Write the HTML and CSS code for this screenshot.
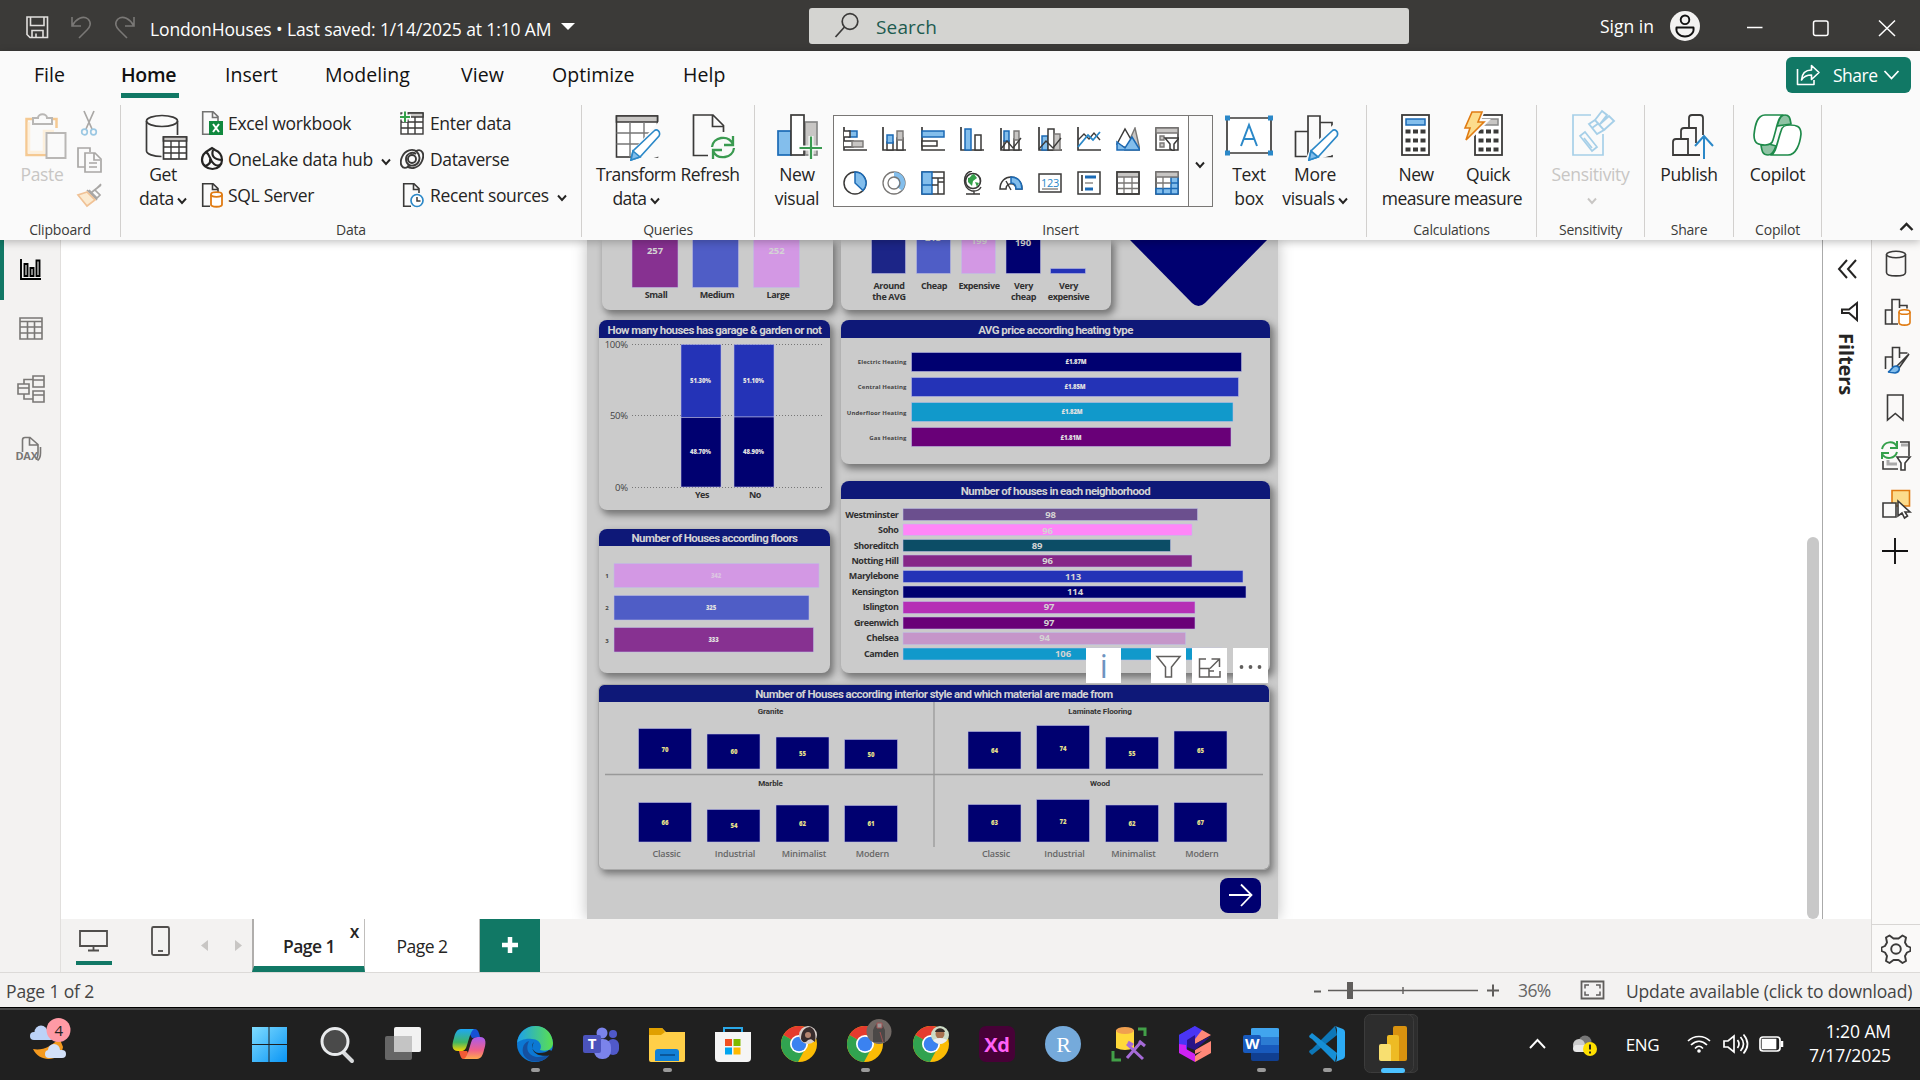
FILE: index.html
```html
<!DOCTYPE html>
<html lang="en">
<head>
<meta charset="utf-8">
<title>LondonHouses</title>
<link rel="stylesheet" href="styles.css">
</head>
<body>
<svg class="defs" width="0" height="0">
  <symbol id="chev" viewBox="0 0 10 8"><path d="M1 1.500 5 6 9 1.500" fill="none" stroke="currentColor" stroke-width="1.900"/></symbol>
  <symbol id="page" viewBox="0 0 24 26"><path d="M10 24.300H2.700V1.700H13l5 5V11M12.500 2v5.500H18" fill="none" stroke="#3b3a39" stroke-width="1.600"/></symbol>
  <symbol id="chrome" viewBox="0 0 36 36"><circle cx="18" cy="18" r="18" fill="#fbbc05"/><path d="M18 18 2.400 9A18 18 0 0 1 33.600 9H18z" fill="#e53b2e"/><path d="M2.400 9A18 18 0 0 0 17 36l7-13-6-5z" fill="#31a350"/><circle cx="18" cy="18" r="9" fill="#fff"/><circle cx="18" cy="18" r="7.300" fill="#3b82f0"/></symbol>
</svg>

<header class="titlebar">
  <svg class="quick" width="150" height="51" fill="none" stroke="#e1dfdd" stroke-width="1.6">
    <path d="M27 17h20.500v20.500H30L27 34.500zM30.500 17v8.500h13.500V17M32 37.500v-7h11v7M36 37v-3.500"/>
    <g stroke="#7a7876"><path d="M72 17v9h9M72.500 25.500C76 19 83 15 88 19c4 4 2 8-1 11l-8 8"/><path d="M134 17v9h-9M133.500 25.500C130 19 123 15 118 19c-4 4-2 8 1 11l8 8"/></g>
  </svg>
  <span class="doc">LondonHouses • Last saved: 1/14/2025 at 1:10 AM</span>
  <i class="tri"></i>
  <div class="search">
    <svg width="26" height="28" fill="none" stroke="#3b3a39" stroke-width="1.700"><circle cx="16" cy="9.500" r="7.800"/><path d="M10.500 15 1.500 25"/></svg>
    <span>Search</span>
  </div>
  <span class="signin">Sign in</span>
  <svg class="avatar" width="30" height="30"><circle cx="15" cy="15" r="15" fill="#f3f2f1"/><circle cx="15" cy="8.800" r="4.300" fill="none" stroke="#111" stroke-width="1.900"/><path d="M6.500 16.500h17c1 5-3 9-8.500 9s-9.500-4-8.500-9z" fill="none" stroke="#111" stroke-width="1.900" stroke-linejoin="round"/></svg>
  <svg class="winbtns" width="160" height="51" fill="none" stroke="#fff" stroke-width="1.500"><path d="M7 27.500h15.500"/><rect x="73.500" y="21" width="14.500" height="14.500" rx="2"/><path d="M139 20.500 155 36M155 20.500 139 36"/></svg>
</header>

<div class="ribbon">
  <nav class="menu">
    <a class="m-file">File</a><a class="m-home on">Home</a><a class="m-insert">Insert</a><a class="m-modeling">Modeling</a><a class="m-view">View</a><a class="m-optimize">Optimize</a><a class="m-help">Help</a>
    <button class="share"><svg width="26" height="24" fill="none" stroke="#fff" stroke-width="1.600"><path d="M1.500 6v15.500H18V17M5.500 17C6 10 10 7 15.500 7V2.500L23 9.500 15.500 16.500V12C11 12 8 13 5.500 17z" stroke-linejoin="round"/></svg><span>Share</span><svg width="17" height="12" fill="none" stroke="#fff" stroke-width="1.800"><path d="M1.500 2 8.500 9.500 15.500 2"/></svg></button>
  </nav>
  <div class="groups">
    <section class="group g-clip">
      <div class="body">
        <div class="big off"><svg width="52" height="56" fill="none" stroke-width="2"><path d="M18 14H10.500v36H30M36 14h4.500v9" stroke="#f5c992" stroke-width="2.500"/><path d="M13 17v30h15V26h10" stroke="#fdf0dc" stroke-width="2.500"/><path d="M17 19v-6h5c0-5 9-5 9 0h5v6z" stroke="#b9b7b5" fill="#fafafa"/><path d="M30.500 28H49.500v25H30.500z" stroke="#b9b7b5" fill="#fafafa"/></svg>Paste</div>
        <svg class="clipcol" width="26" height="115" fill="none" stroke-width="1.700"><g stroke="#a9a7a5"><path d="M8 6 16 24M18 6 10 24"/><path d="M9 62H2V43h12v4M9 48h10l6 6v13H9zM18 48v7h6M13 58h8M13 62h8"/><path d="m25 80-9 7m-3-2 8 8 3-3-5-5 6-6M11 85l10 10"/></g><g stroke="#9cc8e3"><circle cx="8.500" cy="27" r="2.800"/><circle cx="17.500" cy="27" r="2.800"/></g><path d="M11 87 2 90l9 11 8-6z" stroke="#f0c296" fill="#fbead0"/></svg>
      </div>
      <h4>Clipboard</h4>
    </section>
    <section class="group g-data">
      <div class="body">
        <div class="big getdata"><svg width="52" height="56" fill="none" stroke="#3b3a39" stroke-width="1.700"><ellipse cx="25" cy="16" rx="15.500" ry="5.500"/><path d="M9.500 16v30c0 3 7 5.500 15 5.500M40.500 16v14"/><rect x="26.500" y="32" width="23" height="22" fill="#fff"/><path d="M26.500 32h23v4h-23z" fill="#c8c6c4"/><path d="M26.500 42h23M26.500 48h23M34 36v18M42 36v18" stroke-width="1.400"/></svg>Get<br>data<svg class="chev"><use href="#chev"/></svg></div>
        <ul class="list l1">
          <li><svg width="24" height="26"><use href="#page" opacity=".7"/><rect x="9" y="11" width="14" height="14" fill="#10893e"/><path d="m13 14 6 8m0-8-6 8" stroke="#fff" stroke-width="2"/></svg>Excel workbook</li>
          <li><svg width="24" height="26" fill="none" stroke="#252423" stroke-width="2.200"><path d="M9 4 12 2l3 2c5 2 7 6 7 10 0 5-4 9-9.500 9S2 19 2 14 5 6 9 4z"/><path d="M6 6c5 3 3 8 8 12 2 2 5 2 7 0M13 4c-2 6 1 9 8 10M5 20c4-1 6-3 5-7"/></svg>OneLake data hub<svg class="chev far"><use href="#chev"/></svg></li>
          <li><svg width="24" height="26"><use href="#page"/><path d="M11 12.500v10c0 3 11 3 11 0v-10" fill="#fff" stroke="#e07b12" stroke-width="1.800"/><ellipse cx="16.500" cy="12.500" rx="5.500" ry="2.300" fill="#fff" stroke="#e07b12" stroke-width="1.800"/></svg>SQL Server</li>
        </ul>
        <ul class="list l2">
          <li><svg width="24" height="26" fill="none" stroke="#3b3a39" stroke-width="1.400"><rect x="1" y="3" width="22" height="21" fill="#fff"/><path d="M8 3h15v4H8z" fill="#c8c6c4"/><path d="M1 12h22M1 18h22M8 7v17M15 7v17"/><path d="M0 7h11M5 1v11" stroke="#fafafa" stroke-width="5"/><path d="M0 7h10M5 1.500V12" stroke="#34a04a" stroke-width="2"/></svg>Enter data</li>
          <li><svg width="24" height="26" fill="none" stroke="#3b3a39" stroke-width="1.900"><circle cx="12" cy="13" r="4"/><path d="M8 21C2 24-1 18 2 11 5 4 13 2 17 6c4 4 3 11-2 13-5 2-9-1-9-6s6-8 10-5M16 5c6-3 9 3 6 10-3 7-11 9-15 5"/></svg>Dataverse</li>
          <li><svg width="24" height="26"><use href="#page" x="1"/><circle cx="17" cy="18.500" r="6" fill="#fff" stroke="#2b88c8" stroke-width="1.700"/><path d="M17 15v4h3.500" fill="none" stroke="#3b3a39" stroke-width="1.500"/></svg>Recent sources<svg class="chev far"><use href="#chev"/></svg></li>
        </ul>
      </div>
      <h4>Data</h4>
    </section>
    <section class="group g-query">
      <div class="body">
        <div class="big transform"><svg width="52" height="56" fill="none" stroke="#3b3a39" stroke-width="1.600"><rect x="6.500" y="11" width="41" height="41" fill="#fff"/><path d="M6.500 11h41v6h-41z" fill="#c8c6c4"/><path d="M6.500 28h41M6.500 39h41M20 17v35M34 17v35" stroke="#777" stroke-width="1.400"/><path d="M48 22 27 45l-4 11 27-8z" fill="#fafafa" stroke="#fafafa" stroke-width="6"/><path d="M44 26c3-3 7 1 5 5L30 52l-9 3 2-9z" stroke="#2b88c8" fill="#fff"/><path d="m23 46 7 6-9 3z" fill="#83beec" stroke="#2b88c8"/></svg>Transform<br>data<svg class="chev"><use href="#chev"/></svg></div>
        <div class="big refresh"><svg width="52" height="56" fill="none" stroke="#3b3a39" stroke-width="1.700"><path d="M24 50.500H9.500V10H29l10.500 10.500V27M28.500 10v11.500H39"/><g stroke="#3a9a50" stroke-width="2.300"><path d="M28 42c1-10 16-13 21-3M49 31v9h-9M50 43c-1 10-16 13-21 3M29 54v-9h9"/></g></svg>Refresh</div>
      </div>
      <h4>Queries</h4>
    </section>
    <section class="group g-insert">
      <div class="body">
        <div class="big newvis"><svg width="52" height="56" fill="none" stroke="#3b3a39" stroke-width="1.700"><rect x="34" y="17" width="12" height="33" fill="#c8c6c4" stroke="#888"/><rect x="7" y="26" width="13" height="24" fill="#83beec" stroke="#1b6ab5"/><rect x="20" y="10" width="13" height="40" fill="#fff"/><path d="M28 43h24M40 31v24" stroke="#fafafa" stroke-width="5"/><path d="M28.500 43H51M40 31.500V54" stroke="#3a9a50" stroke-width="2.200"/></svg>New<br>visual</div>
        <div class="gallery">
          <div class="cells">
            <svg viewBox="0 0 24 24"><path class="k" d="M1 0v23h23"/><path class="b" d="M6 4h8v6H6z"/><path class="w" d="M1 4h6v6H1M1 14h9v6H1"/><path class="g" d="M9 14h11v6H9z"/></svg>
            <svg viewBox="0 0 24 24"><path class="k" d="M1 0v23h23"/><path class="w" d="M5 15h6v8H5zM15 11h6v12h-6z"/><path class="b" d="M5 8h6v8H5z"/><path class="g" d="M15 4h6v9h-6z"/></svg>
            <svg viewBox="0 0 24 24"><path class="k" d="M1 0v23h23"/><path class="b" d="M1 4h22v6H1z"/><path class="w" d="M1 14h15v5H1z"/></svg>
            <svg viewBox="0 0 24 24"><path class="k" d="M1 0v23h23"/><path class="b" d="M5 2h6v21H5z"/><path class="w" d="M15 8h6v15h-6z"/></svg>
            <svg viewBox="0 0 24 24"><path class="k" d="M2 1v22h21"/><path class="w" d="M5 14h5v9H5zM15 12h5v11h-5z"/><path class="b" d="M5 4h5v10H5z"/><path class="g" d="M15 4h5v9h-5z"/><path class="k t" d="m2 22 6-8 6 7 8-10"/></svg>
            <svg viewBox="0 0 24 24"><path class="k" d="M1 0v23h23"/><path class="b" d="M4 9h6v14H4z"/><path class="w" d="M10 2h6v21h-6z"/><path class="g" d="M16 7h6v16h-6z"/><path class="k t" d="m1 22 7-8 7 7 8-10"/></svg>
            <svg viewBox="0 0 24 24"><path class="k" d="M1 0v23h23"/><path class="k t" d="m1 13 6-6 5 5 5-6 6 7"/><path class="l" d="M1 20 11 8l5 5 7-8"/></svg>
            <svg viewBox="0 0 24 24"><path class="g" d="m19 1 5 22H9z"/><path class="w" d="M1 17 9 2l8 14-7 5z"/><path class="b" d="m1 15 8 6 7-11 8 13H1z"/></svg>
            <svg viewBox="0 0 24 24"><path class="w" d="M1 1h22v22H1z"/><path class="g" d="M1 1h22v5H1z"/><path class="g" d="M5 9h4v4H5zM5 16h4v4H5z"/><path class="w" d="M10 11h14l-5 6v7l-4-2v-5z"/></svg>
            <svg viewBox="0 0 24 24"><circle class="w" cx="12" cy="12" r="11"/><path class="b" d="M12 1a11 11 0 0 1 8 18.500L12 12z"/></svg>
            <svg viewBox="0 0 24 24"><circle class="gl" cx="12" cy="12" r="11"/><path class="b n" d="M12 1a11 11 0 0 1 8 18.500L15 16a5 5 0 0 0-3-9z"/><circle class="gl" cx="12" cy="12" r="6"/></svg>
            <svg viewBox="0 0 24 24"><path class="w" d="M1 1h22v22H1z"/><path class="b" d="M1 1h10v13H1zM1 14h10v9H1z"/><path class="k t" d="M11 7h12M11 14h6V7M17 14v9M17 11h6"/></svg>
            <svg viewBox="0 0 24 24"><circle cx="13" cy="10" r="7.500" fill="#fff" stroke="#3b3a39" stroke-width="1.700"/><path d="M8 7c3 0 3-4 6-4l3 4-4 3-1 5-4-4zM15 11l4 1-2 4z" fill="#34a04a"/><path class="k t" d="M12 0C2 1 2 18 12 20h2v3M6 23h14M14 20c3 0 6-2 7-4"/></svg>
            <svg viewBox="0 0 24 24"><path class="w" d="M1 18C1 2 23 2 23 18h-6c0-7-10-7-10 0z"/><path class="b" d="M12 6c7 0 11 5 11 12h-6c0-4-2-6-5-6z"/><path class="k t" d="M12 19 7 10"/></svg>
            <svg viewBox="0 0 24 24"><path class="w" d="M1 3h22v18H1z"/><path class="gl" d="M4 18h16"/><text x="12" y="15.500" class="n123">123</text></svg>
            <svg viewBox="0 0 24 24"><path class="w" d="M1 1h22v22H1z"/><path d="M5 4v16" class="k"/><path d="M8 6h11M8 18h8" stroke="#1b6ab5" stroke-width="3"/><path class="gl" d="M8 12h8"/></svg>
            <svg viewBox="0 0 24 24"><path class="w" d="M1 1h22v22H1z"/><path class="g" d="M1 1h22v5H1z"/><path class="gl" d="M1 12h22M1 17.500h22M8 6v17M16 6v17"/><path class="k t" d="M1 1h22v22H1z"/></svg>
            <svg viewBox="0 0 24 24"><path class="w" d="M1 1h22v22H1z"/><path class="b" d="M16 6h7v17H1v-5.500h15z"/><path class="g" d="M1 1h22v5H1z"/><path class="gl" d="M1 12h15M8 6v12"/><path d="M16 12h7M16 17.500h7M8 17.500V23M16 17.500V23" stroke="#1b6ab5" stroke-width="1.500"/></svg>
          </div>
          <div class="more"><svg class="chev"><use href="#chev"/></svg></div>
        </div>
        <div class="big textbox"><svg width="52" height="56" fill="none"><path d="M4 13h44v35H4z" stroke="#3b3a39" stroke-width="1.700" fill="#fff"/><path d="M2 10.500h5v5H2zM45 10.500h5v5h-5zM2 45.500h5v5H2zM45 45.500h5v5h-5z" fill="#2b88c8"/><path d="m18 41 8-21 8 21M20.500 34h11" stroke="#2b88c8" stroke-width="2"/></svg>Text<br>box</div>
        <div class="big morevis"><svg width="52" height="56" fill="none" stroke="#3b3a39" stroke-width="1.700"><path d="M19 51.500H6.500v-25H19M19 51.500V11h12v40.500zM31 17.500h12v34H31"/><path d="M46 22 24 45l-4 9 26-8z" fill="#fafafa" stroke="#fafafa" stroke-width="6"/><path d="M43 26c3-3 7 1 5 5L29 52l-9 3 2-9z" stroke="#2b88c8" fill="#fff"/><path d="m22 46 7 6-9 3z" fill="#83beec" stroke="#2b88c8"/></svg>More<br>visuals<svg class="chev"><use href="#chev"/></svg></div>
      </div>
      <h4>Insert</h4>
    </section>
    <section class="group g-calc">
      <div class="body">
        <div class="big newm"><svg width="52" height="56" fill="none"><rect x="12" y="10" width="27" height="40" stroke="#3b3a39" stroke-width="1.800" fill="#fff"/><rect x="16" y="14" width="19" height="6" fill="#83beec" stroke="#1b6ab5" stroke-width="1.500"/><path d="M15.500 26.500h20M15.500 35.500h20M15.500 44.500h20" stroke="#3b3a39" stroke-width="4" stroke-dasharray="5 2.500"/></svg>New<br>measure</div>
        <div class="big quickm"><svg width="52" height="56" fill="none"><rect x="13" y="10" width="27" height="40" stroke="#3b3a39" stroke-width="1.800" fill="#fff"/><rect x="17" y="14" width="19" height="6" fill="#c8c6c4" stroke="#888" stroke-width="1.500"/><path d="M16.500 26.500h20M16.500 35.500h20M16.500 44.500h20" stroke="#3b3a39" stroke-width="4" stroke-dasharray="5 2.500"/><path d="M9 6.500h11l-4 10h7L4 36l4-13H2z" fill="#fafafa" stroke="#fafafa" stroke-width="5"/><path d="M10 7h10l-4 10h6L4 35l4-12H3z" fill="#fcdc8c" stroke="#e07b12" stroke-width="1.600"/></svg>Quick<br>measure</div>
      </div>
      <h4>Calculations</h4>
    </section>
    <section class="group g-sens">
      <div class="body">
        <div class="big off"><svg width="52" height="56" fill="none" stroke="#a6cfe8" stroke-width="1.700"><path d="M27 10H9v40h30V29"/><path d="m16 31 5-4 12 15-5 4zM20 33l8 10"/><path d="m25 19 6-4 9 10-7 4zM31 15l7-9 5 4-7 9M40 25l10-9-5-5-9 8M28 23l7-5" stroke-width="1.900"/></svg>Sensitivity<br><svg class="chev"><use href="#chev"/></svg></div>
      </div>
      <h4>Sensitivity</h4>
    </section>
    <section class="group g-share">
      <div class="body">
        <div class="big"><svg width="52" height="56" fill="none" stroke="#3b3a39" stroke-width="1.800"><path d="M10 50V37q0-3 3-3h12v16zM18 34V26q0-3 3-3h12v12M26 23V13q0-3 3-3h8q3 0 3 3v17M25 50h12M25 35v15M33 35v3"/><path d="M41 54V31M32 41l9-10 9 10" stroke="#2b88c8" stroke-width="2"/></svg>Publish</div>
      </div>
      <h4>Share</h4>
    </section>
    <section class="group g-copilot">
      <div class="body">
        <div class="big"><svg width="52" height="56" fill="none" stroke="#1e8a4a" stroke-width="1.700" stroke-linejoin="round"><path d="M26 21c2-8 4-11 8-11 5 0 5 4 6 9l-7 1z" fill="#8fc3a4"/><path d="M25 41c-2 6-4 9-8 9-5 0-6-3-7-10l8-1z" fill="#8fc3a4"/><path d="M14 10h18c-5 2-6 12-10 25-1 4-4 5-8 5-6 0-11-1-11-10C4 20 6 10 14 10z" fill="#fff"/><path d="M37 50H20c5-2 6-12 10-24 1-5 4-6 9-6 6 0 11 1 11 9-1 10-5 21-13 21z" fill="#fff"/></svg>Copilot</div>
      </div>
      <h4>Copilot</h4>
    </section>
    <svg class="collapse" width="15" height="10" fill="none" stroke="#252423" stroke-width="2.400"><path d="m1.500 8 6-6 6 6"/></svg>
  </div>
</div>

<main class="work">
  <aside class="views">
    <svg width="60" height="240" viewBox="0 240 60 240" fill="none" stroke="#797775" stroke-width="1.600">
      <path d="M0 240h4v60H0z" fill="#117865" stroke="none"/>
      <path d="M21 259v20h20M24.500 264h3v12h-3zM30.500 268h3v8h-3zM36.500 260.500h3V276h-3z" stroke="#000" stroke-width="1.900"/>
      <path d="M20 318h22v21H20zM20 321.500h22M20 327h22M20 333h22M27.500 321v18M34.500 321v18"/>
      <path d="M33 376h11v11H33zM33 380h11M18 384h11v10H18zM18 388h11M33 391h11v11H33zM33 395h11M24 384v-4.500h9M24 394v5h9"/>
      <path d="M22.500 452v-12q0-2.500 2.500-2.500h5l8 7v8c0 4-1 6-2 7M29.500 438v7h8M40.500 447v6c0 4-1 6-3 7.500"/>
      <text x="15.500" y="460" class="dax">DAX</text>
    </svg>
  </aside>

  <div class="center">
    <div class="canvas">
      <div class="report">
        <div class="row0">
          <section class="card sizes"><svg width="231" height="70" viewBox="602 240 231 70">
            <g class="edge"><path d="M632 230h46v57.500h-46z" fill="#873191"/><path d="M692.500 230h46v57.500h-46z" fill="#4f5dc6"/><path d="M753.500 230h46v57.500h-46z" fill="#d398e4"/></g>
            <g class="v9"><text x="655" y="254">257</text><text x="776.500" y="254">252</text></g>
            <g class="n9"><text x="656" y="298">Small</text><text x="717" y="298">Medium</text><text x="778" y="298">Large</text></g>
          </svg></section>
          <section class="card prices"><svg width="270" height="70" viewBox="841 240 270 70">
            <g class="edge"><path d="M871.500 230h34v43.500h-34z" fill="#1c2587"/><path d="M916.500 230h34v43.500h-34z" fill="#4f5dc6"/><path d="M961.500 230h34v43.500h-34z" fill="#d398e4"/><path d="M1006 230h34.500v43.500H1006z" fill="#000070"/><path d="M1050.500 268.500h35v5h-35z" fill="#2433b7"/></g>
            <g class="v9"><text x="933" y="241">213</text><text x="979" y="244">199</text><text x="1023" y="246">190</text></g>
            <g class="n9"><text x="889" y="289">Around</text><text x="889" y="300">the AVG</text><text x="934" y="289">Cheap</text><text x="979" y="289">Expensive</text><text x="1023.500" y="289">Very</text><text x="1023.500" y="300">cheap</text><text x="1068.500" y="289">Very</text><text x="1068.500" y="300">expensive</text></g>
          </svg></section>
          <svg class="diamond" width="140" height="68" viewBox="1128 240 140 68"><path d="M1129 239h139l-63 64q-6.500 6-13 0z" fill="#000070"/></svg>
        </div>
        <div class="row1">
          <div class="col">
            <section class="card garage"><h3>How many houses has garage &amp; garden or not</h3><svg width="231" height="172" viewBox="599 338 231 172">
              <path d="M632 344.500h191M632 415.500h191M632 487.500h191" stroke="#777" stroke-dasharray="1 2"/>
              <g class="edge"><path d="M681 344.500h40v73h-40zM734 344.500h40v72.500h-40z" fill="#2433b7"/><path d="M681 417.500h40v69.500h-40zM734 417h40v70h-40z" fill="#000070"/></g>
              <g class="ax"><text x="628" y="347.500">100%</text><text x="628" y="418.500">50%</text><text x="628" y="490.500">0%</text></g>
              <g class="v6"><text x="700.500" y="383">51.30%</text><text x="753.500" y="383">51.10%</text><text x="700.500" y="454">48.70%</text><text x="753.500" y="454">48.90%</text></g>
              <g class="n9"><text x="702" y="498">Yes</text><text x="755" y="498">No</text></g>
            </svg></section>
            <section class="card floors"><h3>Number of Houses according floors</h3><svg width="231" height="127" viewBox="599 546 231 127">
              <g class="edge"><path d="M614 563.500h205v24H614z" fill="#d398e4"/><path d="M614 595.500h195v24.500H614z" fill="#4f5dc6"/><path d="M614 627.500h199.500V652H614z" fill="#873191"/></g>
              <g class="v6"><text x="716" y="578" opacity=".6">342</text><text x="711" y="610">325</text><text x="713.500" y="642">333</text></g>
              <g class="n6 mid"><text x="607" y="578">1</text><text x="607" y="610">2</text><text x="607" y="643">3</text></g>
            </svg></section>
          </div>
          <div class="col">
            <section class="card heating"><h3>AVG price according heating type</h3><svg width="429" height="126" viewBox="841 338 429 126">
              <g class="edge"><path d="M911.500 352.500h330v19h-330z" fill="#000070"/><path d="M911.500 377.500h327v19h-327z" fill="#2433b7"/><path d="M911.500 402.500h321.500v19H911.500z" fill="#1199cb"/><path d="M911.500 427.500H1231v19H911.500z" fill="#690078"/></g>
              <g class="v6"><text x="1076" y="364">£1.87M</text><text x="1075" y="389">£1.85M</text><text x="1072" y="414">£1.82M</text><text x="1071" y="440">£1.81M</text></g>
              <g class="n6"><text x="906.500" y="364">Electric Heating</text><text x="906.500" y="389">Central Heating</text><text x="906.500" y="415">Underfloor Heating</text><text x="906.500" y="440">Gas Heating</text></g>
            </svg></section>
            <section class="card hoods"><h3>Number of houses in each neighborhood</h3><svg width="429" height="174" viewBox="841 499 429 174">
              <g class="edge"><path d="M903 508.500h294.500v12H903z" fill="#6b4f8e"/><path d="M903 524h289v11.500H903z" fill="#ff86f8"/><path d="M903 539.500h267.500v12H903z" fill="#0c4d66"/><path d="M903 555h289v12H903z" fill="#862787"/><path d="M903 570.500h340v12H903z" fill="#2433b7"/><path d="M903 586h343v12H903z" fill="#000070"/><path d="M903 601.500h292v12H903z" fill="#b52fb5"/><path d="M903 617h292v12H903z" fill="#690078"/><path d="M903 632.500h282.500v12H903z" fill="#c596c9"/><path d="M903 648h319v12H903z" fill="#1199cb"/></g>
              <g class="v9"><text x="1050.500" y="518">98</text><text x="1047.500" y="533.500">96</text><text x="1037" y="549">89</text><text x="1047.500" y="564">96</text><text x="1073" y="580">113</text><text x="1075" y="595">114</text><text x="1049" y="610">97</text><text x="1049" y="626">97</text><text x="1044.500" y="641">94</text><text x="1063" y="657">106</text></g>
              <g class="n9 end"><text x="898.500" y="518">Westminster</text><text x="898.500" y="533">Soho</text><text x="898.500" y="549">Shoreditch</text><text x="898.500" y="564">Notting Hill</text><text x="898.500" y="579">Marylebone</text><text x="898.500" y="595">Kensington</text><text x="898.500" y="610">Islington</text><text x="898.500" y="626">Greenwich</text><text x="898.500" y="641">Chelsea</text><text x="898.500" y="657">Camden</text></g>
            </svg></section>
          </div>
          <div class="vistools">
            <span>i</span>
            <svg width="35" height="35" fill="none" stroke="#605e5c" stroke-width="1.500"><path d="M6 8.500h23L20.500 19v10h-6V19z"/></svg>
            <svg width="35" height="35" fill="none" stroke="#605e5c" stroke-width="1.500"><path d="M14 11H7.500v18H28v-6M7.500 20.500H17V29M17 23h5M18 20.500l9-9M19.500 11h8v8"/></svg>
            <svg width="35" height="35" fill="#605e5c"><circle cx="8.500" cy="19" r="1.900"/><circle cx="17.500" cy="19" r="1.900"/><circle cx="26.500" cy="19" r="1.900"/></svg>
          </div>
        </div>
        <section class="card interior"><h3>Number of Houses according interior style and which material are made from</h3><svg width="670" height="167" viewBox="599 702 670 167">
          <path d="M605 774.500h658M934 702v145" stroke="#999" stroke-width="1.300"/>
          <g class="edge" fill="#000070"><path d="M638.500 728.500h53v40.500h-53zM707 734h53v35h-53zM776 737h53v32h-53zM844.500 739.500h53V769h-53zM968 731.500h53V769h-53zM1036.500 725.500h53V769h-53zM1105.500 737h53v32h-53zM1174 731h53v38h-53z"/><path d="M638.500 802.500h53V842h-53zM707 809.500h53V842h-53zM776 805h53v37h-53zM844.500 805.500h53V842h-53zM968 804.500h53V842h-53zM1036.500 799.500h53V842h-53zM1105.500 805h53v37h-53zM1174 802.500h53V842h-53z"/></g>
          <g class="vy"><text x="665" y="751.500">70</text><text x="734" y="754">60</text><text x="802.500" y="755.500">55</text><text x="871" y="757">50</text><text x="994.500" y="753">64</text><text x="1063" y="750.500">74</text><text x="1132" y="755.500">55</text><text x="1200.500" y="752.500">65</text><text x="665" y="824.500">66</text><text x="734" y="828">54</text><text x="802.500" y="826">62</text><text x="871" y="826">61</text><text x="994.500" y="825">63</text><text x="1063" y="823.500">72</text><text x="1132" y="826">62</text><text x="1200.500" y="824.500">67</text></g>
          <g class="st"><text x="770.500" y="714">Granite</text><text x="1100" y="714">Laminate Flooring</text><text x="770.500" y="786">Marble</text><text x="1100" y="786">Wood</text></g>
          <g class="cat"><text x="666.500" y="857">Classic</text><text x="735" y="857">Industrial</text><text x="804" y="857">Minimalist</text><text x="872.500" y="857">Modern</text><text x="996" y="857">Classic</text><text x="1064.500" y="857">Industrial</text><text x="1133.500" y="857">Minimalist</text><text x="1202" y="857">Modern</text></g>
        </svg></section>
        <svg class="next" width="41" height="35"><rect width="41" height="35" rx="8" fill="#000070"/><path d="M9 17h22M21 6.500 31.500 17 21 28" fill="none" stroke="#fff" stroke-width="1.800"/></svg>
      </div>
      <i class="scroll"></i>
      <div class="filters">
        <svg width="48" height="90" viewBox="1823 240 48 90" fill="none" stroke="#252423" stroke-width="2"><path d="m1847 260-8 9 8 9M1856 260l-8 9 8 9M1857 303v17l-8-7h-7v-3.500h7z"/></svg>
        <span>Filters</span>
      </div>
    </div>
    <div class="pages">
      <svg width="191" height="53" viewBox="61 919 191 53" fill="none" stroke="#504e4c" stroke-width="1.800"><path d="M80 931h27v15H80zM93.500 946v4M88 950.500h11"/><path d="M76 961h36v4H76z" fill="#117865" stroke="none"/><rect x="152" y="927" width="17" height="28" rx="1.500"/><path d="M158 951h5"/><path d="m208 940-7 5.500 7 5.500zM235 940l7 5.500-7 5.500z" fill="#c8c6c4" stroke="none"/></svg>
      <div class="tab on">Page 1<b>x</b></div>
      <div class="tab two">Page 2</div>
      <div class="add"><svg width="18" height="18"><path d="M1 9h16M9 1v16" stroke="#fff" stroke-width="4.500"/></svg></div>
    </div>
  </div>

  <aside class="panes">
    <svg width="48" height="684" viewBox="1872 240 48 684" fill="none" stroke="#3b3a39" stroke-width="1.600">
      <ellipse cx="1896" cy="254.500" rx="9.500" ry="3.300"/><path d="M1886.500 254.500v18c0 4.500 19 4.500 19 0v-18"/>
      <path d="M1892 324h-6.500v-14h7M1898 324h-6v-24.500h7.500V308M1900 305.500h7v3"/><path d="M1899 312v10.500c0 3.500 11 3.500 11 0V312" fill="#fff" stroke="#e07b12"/><ellipse cx="1904.500" cy="312" rx="5.500" ry="2.300" fill="#fff" stroke="#e07b12"/>
      <path d="M1885.500 369v-12h7v10M1892.500 365v-17.500h7V358M1899.500 353h8"/><path d="m1897 366 12-12-10 14z" fill="#fff"/><path d="M1888 372c4-1 3-6 8-6 5 1 4 6-1 7z" fill="#83beec" stroke="#1b6ab5"/>
      <path d="M1887.500 395h15.500v25l-7.700-6.500-7.800 6.500z"/>
      <path d="M1900 442h9v14M1883 461v8h15"/><path d="M1901 445h7M1888 460v4h9" stroke="#aaa" stroke-width="3"/><path d="M1897 457h13l-5 6v7h-4v-7z" fill="#fff"/><path d="M1882 449c2-8 12-9 15-2M1897 441v7h-7M1897 452c-2 7-11 8-15 2M1882 459v-6h7" stroke="#34a04a" stroke-width="2"/>
      <path d="M1892 490.500h17.500V506H1892z" fill="#fcdc8c" stroke="#e07b12"/><path d="M1883 503h13v14h-13z" fill="#faf9f8"/><path d="M1898 501v15l4-3 2.500 5 3-2-2.500-4h5z" fill="#fff"/>
      <path d="M1882 551h26M1895 538v26" stroke="#111" stroke-width="1.900"/>
    </svg>
    <div class="gear"><svg width="30" height="30" viewBox="-15 -15 30 30" fill="none" stroke="#3b3a39" stroke-width="1.900" stroke-linejoin="round"><path d="M-6.500-13.500-2.500-10.500H2.500L6.500-13.500 10-11.500 9-6.500 11-3 14.500-1.500V2L11 3.500 9 7 10 12 6.500 14 2.500 11H-2.500L-6.500 14-10 12-9 7-11 3.500-14.500 2V-1.500L-11-3-9-6.500-10-11.500z"/><circle r="4.800"/></svg></div>
  </aside>
</main>

<footer class="status">
  <span class="pageno">Page 1 of 2</span>
  <svg width="190" height="34" viewBox="1312 973 190 34" fill="none" stroke="#605e5c"><path d="M1314 991.500h7M1487 990.500h12M1493 984.500v12" stroke-width="2"/><path d="M1328 990.500h150M1403 987v7" stroke-width="1.400"/><path d="M1347 982h6v17h-6z" fill="#605e5c" stroke="none"/></svg>
  <span class="zoom">36%</span>
  <svg width="26" height="20" fill="none" stroke="#605e5c" stroke-width="1.800"><path d="M1.500 1.500h22v17h-22z"/><path d="M9 5H5v3.500M16 5h4v3.500M9 15H5v-3.500M16 15h4v-3.500" stroke-width="1.500"/></svg>
  <span class="update">Update available (click to download)</span>
</footer>

<div class="taskbar">
  <svg class="weather" width="60" height="70" viewBox="20 1010 60 70"><path d="M33 1049c8 2 20-2 26-12l4 10c-2 15-24 16-30 2z" fill="#f59a1f"/><g fill="#bcd2f7"><circle cx="41" cy="1032" r="6.500"/><rect x="30" y="1032" width="24" height="8" rx="4"/></g><g fill="#d3e1f9"><circle cx="54" cy="1050" r="6"/><rect x="45" y="1050" width="21" height="8" rx="4"/></g><circle cx="58.500" cy="1030" r="12" fill="#ff9aa5"/><text x="58.500" y="1035.500" class="badge">4</text></svg>
  <div class="apps">
    <svg class="start" viewBox="0 0 36 46"><defs><linearGradient id="win" x2="1" y2="1"><stop stop-color="#7fdcff"/><stop offset="1" stop-color="#0a95f5"/></linearGradient></defs><path d="M1 1h16.500v17H1zM18.500 1H36v17H18.500zM1 19h16.500v17H1zM18.500 19H36v17H18.500z" fill="url(#win)"/></svg>
    <svg viewBox="0 0 36 46"><path d="m24 26 9 9" stroke="#d8dadc" stroke-width="4" stroke-linecap="round"/><circle cx="16" cy="15.500" r="13" fill="#4a4a4a" stroke="#e8eaec" stroke-width="3"/></svg>
    <svg viewBox="0 0 36 46"><rect y="10" width="27" height="24" rx="2" fill="#666"/><rect x="9" y="1" width="27" height="25" rx="2" fill="#f2f2f2"/><path d="M9 10h18v16H9z" fill="#c4c4c4"/></svg>
    <svg viewBox="0 0 36 46"><defs><linearGradient id="c1" x2="0" y2="1"><stop stop-color="#1ea7f5"/><stop offset=".6" stop-color="#3fb565"/><stop offset="1" stop-color="#f8d300"/></linearGradient><linearGradient id="c2" x2="0" y2="1"><stop stop-color="#a85cf0"/><stop offset=".6" stop-color="#f0608a"/><stop offset="1" stop-color="#ffa94d"/></linearGradient></defs><path d="M16 3h8c3 0 4 4 5 8l-8 1z" fill="#1751d6"/><path d="M20 33h-8c-2 0-3-4-4-8h8z" fill="#f25a35"/><path d="M10 3h13c-4 2-6 15-8 19-2 4-5 3-8 3-7 0-6-7-4-13 1-5 3-9 7-9z" fill="url(#c1)"/><path d="M26 33H13c4-2 6-15 8-19 2-3 5-3 8-3 7 0 6 7 4 13-1 5-3 9-7 9z" fill="url(#c2)"/></svg>
    <svg viewBox="0 0 36 46"><defs><linearGradient id="edge" x2="1"><stop stop-color="#1ca0ee"/><stop offset="1" stop-color="#5be04e"/></linearGradient></defs><circle cx="18" cy="18" r="18" fill="#0c78d4"/><path d="M0 17C3-5 34-6 36 17c0 7-7 9-13 7 3-6-2-11-8-11C8 12 2 15 0 17z" fill="url(#edge)"/><path d="M12 15c-6 12 5 21 21 13-5 9-19 10-25 3-4-5-3-14 4-16z" fill="#1550a0"/><path d="M17 16c-4 4-1 11 5 11 5 0 8-1 10-3l4 1-3 4C24 32 11 27 17 16z" fill="#202020"/><rect class="dot" x="14" y="42" width="9" height="4" rx="2"/></svg>
    <svg viewBox="0 0 36 46"><g fill="#5059c9"><circle cx="30" cy="8" r="4"/><rect x="24" y="13" width="12" height="16" rx="6"/></g><circle cx="19" cy="7" r="5.500" fill="#7b83eb"/><rect x="11" y="13" width="17" height="20" rx="8" fill="#7b83eb"/><rect y="9" width="18" height="18" rx="2" fill="#4b53bc"/><text x="9" y="23" class="logo">T</text></svg>
    <svg viewBox="0 0 36 46"><path d="M0 2h13l4 4h19v28q0 2-2 2H2q-2 0-2-2z" fill="#ffcf48"/><path d="M0 2h13l3 4-4 3H0z" fill="#e0a000"/><path d="M6 35V26q0-3 3-3h18q3 0 3 3v9z" fill="#1280d6"/><path d="M11 29h15" stroke="#084a86" stroke-width="1.500"/><rect class="dot" x="14" y="42" width="9" height="4" rx="2"/></svg>
    <svg viewBox="0 0 36 46"><path d="M9 8V2h18v6" fill="none" stroke="#2aa8e8" stroke-width="2"/><path d="M0 6h36v26q0 4-4 4H4q-4 0-4-4z" fill="#f5f5f5"/><path d="M10 13h7v7h-7z" fill="#f25022"/><path d="M18.500 13h7v7h-7z" fill="#7fba00"/><path d="M10 21.500h7v7h-7z" fill="#00a4ef"/><path d="M18.500 21.500h7v7h-7z" fill="#ffb900"/></svg>
    <svg viewBox="0 0 36 46"><use href="#chrome" width="36" height="36"/><circle cx="27" cy="9" r="9" fill="#d8cfcb"/><path d="M20 13c0-8 4-12 9-12 6 2 6 10 5 15-3-2-3-4-7-2-3 4-6 2-7-1z" fill="#382c2c"/><circle cx="27" cy="9" r="3" fill="#b58570"/></svg>
    <svg class="over" viewBox="0 0 36 46"><use href="#chrome" width="36" height="36"/><circle cx="32" cy="5.500" r="12.500" fill="#706864"/><path d="M26 16V4q6-14 12 0v12z" fill="#4b4847"/><path d="M30-3h5v5h-5zM33 6l3 10" stroke="#a05050" fill="#999"/><rect class="dot" x="14" y="42" width="9" height="4" rx="2"/></svg>
    <svg viewBox="0 0 36 46"><use href="#chrome" width="36" height="36"/><circle cx="27" cy="9" r="9" fill="#cddbc5"/><circle cx="27" cy="8" r="4.500" fill="#a8714f"/><path d="M22 6c1-5 9-5 10 0z" fill="#332a28"/><path d="M20 14q7-4 14 0-7 8-14 0z" fill="#eee"/></svg>
    <svg viewBox="0 0 36 46"><rect width="36" height="36" rx="7" fill="#470137"/><text x="18" y="25.500" class="logo xd">Xd</text></svg>
    <svg viewBox="0 0 36 46"><circle cx="18" cy="18" r="18" fill="#75aadb"/><text x="18.500" y="25.500" class="logo r">R</text></svg>
    <svg viewBox="0 0 36 46"><path d="M5 4h18v18q-9 4-18 0z" fill="#ffd93a"/><ellipse cx="14" cy="4.500" rx="9" ry="3.500" fill="#f0a050"/><path d="M27 3h7v7M2 25v9h8" fill="none" stroke="#42a048" stroke-width="3"/><path d="m16 18 16 15M30 16 16 32M17 16l5 3M28 15l6 5" stroke="#a66bd8" stroke-width="3"/></svg>
    <svg viewBox="0 0 36 46"><path d="M18 0 2 9v16l6 3V13l10-6z" fill="#3b2bef"/><path d="m18 0 7 4v5l-15 9v7l-8-3V9z" fill="#4a35f5"/><path d="M2 18v9l16 9v-8l-9-5v-4z" fill="#cf22f2"/><path d="m25 4 9 5-16 9v-5z" fill="#ff8878"/><path d="m18 36 16-9V15l-16 9v4l7-3-7 5z" fill="#ff8878"/><path d="m10 14 8-5v9l8-4 8-4-16 14-8-3z" fill="#2b1488"/></svg>
    <svg viewBox="0 0 36 46"><path d="M8 3q0-1 2-1h24q2 0 2 1v8H8z" fill="#41a5ee"/><path d="M8 11h28v8H8z" fill="#2b7cd3"/><path d="M8 19h28v8H8z" fill="#185abd"/><path d="M8 27h28v6q0 2-2 2H10q-2 0-2-2z" fill="#103f91"/><rect y="9" width="18" height="18" rx="2" fill="#185abd"/><text x="9" y="23" class="logo">W</text><rect class="dot" x="14" y="42" width="9" height="4" rx="2"/></svg>
    <svg viewBox="0 0 36 46"><path d="M26 0 3 23q-3 1-3 3l3 3 25-20z" fill="#0d77b8"/><path d="M26 36 3 13q-3-1-3-3l3-3 25 20z" fill="#168fd6"/><path d="m26 0 8 3q2 1 2 3v24q0 2-2 3l-8 3q2-1 2-4V4q0-3-2-4z" fill="#2cabf5"/><rect class="dot" x="14" y="42" width="9" height="4" rx="2"/></svg>
    <svg class="pbi" viewBox="1362 1012 56 63"><path d="M1408 1014.500h4q6 0 6 6v46q0 6-6 6h-4" fill="#2d2d2d" stroke="#3c3c3c"/><rect x="1364.500" y="1014.500" width="49" height="58" rx="6" fill="#2d2d2d" stroke="#3c3c3c"/><path d="M1395 1026h10q2 0 2 2v31q0 2-2 2h-12v-33q0-2 2-2z" fill="#d9920f"/><path d="M1389 1035h8q2 0 2 2v24h-12v-24q0-2 2-2z" fill="#eebb24"/><path d="M1381 1044h8q2 0 2 2v15h-10q-2 0-2-2v-13q0-2 2-2z" fill="#f8df70"/><rect x="1381" y="1068" width="24" height="5" rx="2.500" fill="#4cc2ff"/></svg>
  </div>
  <div class="tray">
    <svg width="76" height="40" viewBox="1526 1024 76 40" fill="none"><path d="m1530 1048 7.500-8 7.500 8" stroke="#fff" stroke-width="1.900"/><circle cx="1585" cy="1042" r="6.500" fill="#777"/><circle cx="1579" cy="1045" r="6" fill="#ccc"/><rect x="1573" y="1045" width="18" height="7" rx="3.500" fill="#e8e8e8"/><circle cx="1590" cy="1049" r="7" fill="#ffe000"/><path d="M1590 1044.500v5M1590 1051.500v2" stroke="#222" stroke-width="2"/></svg>
    <span class="eng">ENG</span>
    <svg width="104" height="40" viewBox="1683 1024 104 40" fill="none" stroke="#fff" stroke-width="1.700"><path d="M1688 1041c6-6 16-6 22 0M1691 1045c5-5 11-5 16 0M1695 1048.500c3-3 5-3 8 0"/><circle cx="1699" cy="1051" r="1.800" fill="#fff" stroke="none"/><path d="M1724 1041v6h4l6 5v-16l-6 5zM1737.500 1040q3 4 0 8M1740.500 1037q6 7 0 14M1743.500 1034.500q8 9.500 0 19"/><rect x="1760" y="1037" width="20" height="14" rx="3"/><path d="M1762.500 1039.500h13v9h-13z" fill="#fff"/><path d="M1782 1041v6" stroke-width="2.500"/></svg>
    <time>1:20 AM<br>7/17/2025</time>
  </div>
</div>
</body>
</html>
```
FILE: styles.css
```css
* { box-sizing: border-box; margin: 0; padding: 0; }
body { width: 1920px; height: 1080px; overflow: hidden; display: flex; flex-direction: column; font-family: "Open Sans", "Noto Sans", sans-serif; font-size: 17.5px; letter-spacing: -0.35px; color: #252423; background: #fff; }
svg { display: block; flex: none; }
.defs { position: absolute; }
h3, h4 { font-weight: 400; }
ul { list-style: none; }
.chev { display: inline-block; width: 10px; height: 8px; margin-left: 3px; }

.titlebar { height: 51px; flex: none; background: #3b3a38; color: #fff; display: flex; align-items: center; }
.doc { width: 411px; white-space: nowrap; line-height: 24px; padding-top: 7px; font-size: 17.5px; letter-spacing: -0.12px; }
.tri { border: 7px solid transparent; border-top: 7px solid #fff; border-bottom: 0; margin-top: 2px; }
.search { margin-left: 234px; width: 600px; height: 36px; background: #d4d4d1; border-radius: 3px; display: flex; align-items: center; padding-left: 25px; font-size: 19px; color: #1d5b4f; }
.search span { margin-left: 16px; padding-top: 2px; letter-spacing: 0.15px; }
.signin { margin-left: 191px; width: 70px; letter-spacing: 0; }
.avatar { margin-top: 1px; }
.winbtns { margin-left: 40px; }

.ribbon { height: 189px; flex: none; background: #fafafa; position: relative; z-index: 3; box-shadow: 0 2px 8px rgba(0,0,0,.25); }
.menu { height: 54px; display: flex; font-size: 19.5px; letter-spacing: 0.05px; line-height: 26px; padding: 11px 9px 0 34px; }
.menu a { height: 36px; white-space: nowrap; color: #111; }
.m-file { width: 87px; }
.menu .m-home { width: 58px; margin-right: 46px; font-weight: 600; border-bottom: 5px solid #117865; letter-spacing: -0.3px; }
.m-insert { width: 100px; }
.m-modeling { width: 136px; }
.m-view { width: 91px; }
.m-optimize { width: 131px; }
.share { margin: -5px 0 0 auto; width: 125px; height: 36px; border: 0; border-radius: 6px; background: #117865; color: #fff; font: inherit; font-size: 17.5px; letter-spacing: -0.5px; display: flex; align-items: center; padding-left: 10px; }
.share span { width: 50px; margin-left: 11px; text-align: left; }

.groups { display: flex; }
.group { height: 132px; border-right: 1px solid #d2d0ce; }
.group h4 { font-size: 14px; letter-spacing: -0.2px; line-height: 20px; text-align: center; color: #3b3a39; }
.body { height: 115px; display: flex; }
.big { line-height: 24px; text-align: center; white-space: nowrap; display: block; }
.big > svg:first-child { margin: 0 auto 1px; }
.off { color: #c8c6c4; }
.g-clip { width: 121px; }
.g-clip .big { width: 52px; margin-left: 16px; }
.clipcol { margin-left: 8px; }
.g-data { width: 461px; }
.getdata { width: 60px; margin-left: 12px; }
.list { font-size: 17.5px; line-height: 36px; white-space: nowrap; letter-spacing: -0.3px; }
.list li { height: 36px; display: flex; align-items: center; }
.list li > svg:first-child { margin-right: 4px; }
.list .far { margin-left: 8px; margin-top: 5px; }
.l1 { margin-left: 7px; width: 200px; }
.l2 { letter-spacing: -0.35px; }
.l2 li > svg:first-child { margin-right: 6px; }
.g-query { width: 173px; }
.transform { width: 82px; margin-left: 13px; letter-spacing: -0.6px; }
.refresh { width: 62px; margin-left: 2px; letter-spacing: -0.5px; }
.g-insert { width: 612px; }
.newvis { width: 60px; margin-left: 12px; }
.gallery { margin: 10px 0 0 6px; width: 380px; height: 92px; border: 1px solid #797775; background: #fff; display: flex; }
.cells { width: 355px; display: grid; grid-template-columns: repeat(9, 39px); grid-template-rows: 44px 44px; padding: 1px 0 0 1px; border-right: 1px solid #797775; align-items: center; justify-items: center; }
.cells svg { width: 24px; height: 24px; }
.more { flex: 1; background: #fafafa; display: flex; align-items: center; justify-content: center; }
.more .chev { margin: 8px 2px 0 0; }
.k { fill: none; stroke: #3b3a39; stroke-width: 1.7; }
.w { fill: #fff; stroke: #3b3a39; stroke-width: 1.5; }
.b { fill: #83beec; stroke: #1b6ab5; stroke-width: 1.5; }
.g { fill: #c8c6c4; stroke: #797775; stroke-width: 1.4; }
.gl { fill: none; stroke: #797775; stroke-width: 1.3; }
.l { fill: none; stroke: #2b88c8; stroke-width: 1.8; }
.t { stroke-width: 1.4; }
.n { stroke: none; }
.n123 { font-size: 11px; fill: #2b88c8; text-anchor: middle; }
.textbox { width: 52px; margin-left: 10px; }
.morevis { width: 72px; margin-left: 4px; }
.g-calc { width: 170px; }
.newm { width: 72px; margin-left: 13px; letter-spacing: -0.5px; }
.quickm { width: 72px; margin-left: 0; letter-spacing: -0.5px; }
.g-sens { width: 108px; }
.g-share { width: 89px; }
.g-copilot { width: 88px; }
.g-sens .body, .g-share .body, .g-copilot .body { justify-content: center; }
.collapse { margin: 117px 0 0 77px; }

.work { height: 732px; flex: none; display: flex; }
.views { width: 61px; background: #f3f2f1; border-right: 1px solid #e1dfdd; }
.dax { font-size: 11px; font-weight: 700; fill: #797775; stroke: none; letter-spacing: -0.3px; }
.center { width: 1810px; }
.canvas { height: 679px; display: flex; background: #fff; overflow: hidden; padding-left: 526px; }
.report { width: 691px; background: #cbcbcb; box-shadow: 0 0 14px rgba(0,0,0,.25); padding-left: 12px; flex: none; display: flex; flex-direction: column; }
.row0 { display: flex; height: 70px; margin: 0 0 10px 3px; }
.card { background: #cbcbcb; border-radius: 8px; box-shadow: 3px 4px 7px 1px rgba(0,0,0,.42); overflow: hidden; flex: none; }
.row0 .card { border-radius: 0 0 8px 8px; }
.prices { margin-left: 8px; }
.diamond { margin-left: 17px; }
.row1 { display: flex; gap: 11px; height: 365px; position: relative; }
.col { display: flex; flex-direction: column; }
.card h3 { height: 18px; background: #0e1878; color: #d2d2d2; font: 700 11.5px/20px Roboto, sans-serif; letter-spacing: -0.55px; text-align: center; white-space: nowrap; }
.garage { width: 231px; height: 190px; }
.floors { width: 231px; height: 144px; margin-top: 19px; }
.heating { width: 429px; height: 144px; }
.hoods { width: 429px; height: 192px; margin-top: 17px; }
.interior { width: 670px; height: 184px; outline: 1px solid #aaa; border-radius: 5px; }
.floors h3, .interior h3 { height: 17px; line-height: 18px; }
.edge path { stroke: rgba(190,190,230,.55); stroke-width: 1; }
.card text { letter-spacing: -0.1px; }
.v9 text, .n9 text { font-size: 9px; font-weight: 700; text-anchor: middle; }
.v9 { fill: #d4d4d4; }
.v9 text { font-size: 9.5px; }
.n9 { fill: #303030; }
.card .n9 text { font-weight: 700; letter-spacing: -0.4px; }
.card .end text { text-anchor: end; }
.ax { font-size: 9.5px; fill: #444; text-anchor: end; }
.card .ax text { letter-spacing: -0.2px; }
.v6 { font-size: 6px; font-weight: 800; fill: #e2e2e2; text-anchor: middle; }
.n6 { font-size: 6px; font-weight: 700; fill: #444; text-anchor: end; }
.card .n6 text { letter-spacing: 0.1px; }
.card .mid text { text-anchor: middle; }
.vy { font-size: 6px; font-weight: 800; fill: #e6e08c; text-anchor: middle; }
.st { font: 700 8px Roboto, sans-serif; fill: #333; text-anchor: middle; }
.cat { font-size: 9px; font-weight: 600; fill: #666; text-anchor: middle; }
.card .cat text { letter-spacing: -0.15px; }
.vistools { position: absolute; left: 487px; top: 328px; display: flex; gap: 6px; }
.vistools > * { width: 35px; height: 35px; background: #fff; }
.vistools span { margin-right: 24px; color: #6e93c0; font: 400 32px/35px "Open Sans", sans-serif; text-align: center; }
.next { margin: 9px 0 0 621px; }
.scroll { width: 12px; height: 382px; margin: 297px 3px 0 529px; background: #c8c8c8; border-radius: 6px; flex: none; }
.filters { width: 49px; border-left: 1px solid #aaa; background: #fff; flex: none; }
.filters span { display: block; writing-mode: vertical-rl; font-weight: 700; font-size: 20px; line-height: 26px; margin: 3px 0 0 10px; letter-spacing: -0.1px; }

.pages { height: 53px; background: #f3f2f1; display: flex; }
.tab { width: 113px; background: #fff; border-right: 1px solid #c0bebc; text-align: center; line-height: 54px; position: relative; letter-spacing: -0.5px; }
.tab.two { width: 115px; }
.tab.on { font-weight: 600; border-left: 2px solid #b0aeac; border-bottom: 6px solid #117865; }
.tab b { position: absolute; right: 5px; top: 2px; line-height: 20px; font-weight: 600; }
.add { width: 60px; background: #117865; display: flex; align-items: center; justify-content: center; }
.add svg { margin-top: -2px; }
.panes { width: 49px; background: #faf9f8; border-left: 1px solid #d8d6d4; }
.gear { height: 48px; border-top: 1px solid #d8d6d4; padding: 9px 0 0 9px; }

.status { height: 35px; flex: none; background: #f3f2f1; border-top: 1px solid #dcdad8; display: flex; align-items: center; color: #444; white-space: nowrap; }
.pageno { width: 1306px; margin-left: 6px; padding-top: 2px; letter-spacing: -0.15px; }
.zoom { margin-left: 16px; width: 62px; letter-spacing: -0.6px; color: #666; }
.update { margin-left: 20px; padding-top: 2px; letter-spacing: -0.18px; }

.taskbar { height: 73px; background: #202020; border-top: 1px solid #000; box-shadow: inset 0 2px #484848; display: flex; color: #fff; padding-top: 2px; }
.weather { margin-left: 20px; }
.badge { font-size: 15px; text-anchor: middle; fill: #222; }
.apps { display: flex; gap: 30px; margin: 16px 0 0 171px; }
.apps svg { width: 36px; height: 46px; }
.apps .start { margin-right: 2px; }
.apps .over { overflow: visible; }
.apps .pbi { width: 56px; height: 63px; margin: -14px 0 0 -13px; }
.dot { fill: #9a9a9a; }
.logo { font-size: 15px; font-weight: 700; fill: #fff; text-anchor: middle; }
.xd { font-size: 20px; fill: #ff61f6; }
.r { font: 22px "Liberation Serif", serif; }
.tray { margin-left: 108px; padding-top: 14px; display: flex; }
.eng { width: 81px; text-align: center; line-height: 42px; font-size: 17px; }
.tray time { width: 104px; text-align: right; font-size: 17.5px; line-height: 24px; letter-spacing: -0.1px; margin-top: -5px; }
```
